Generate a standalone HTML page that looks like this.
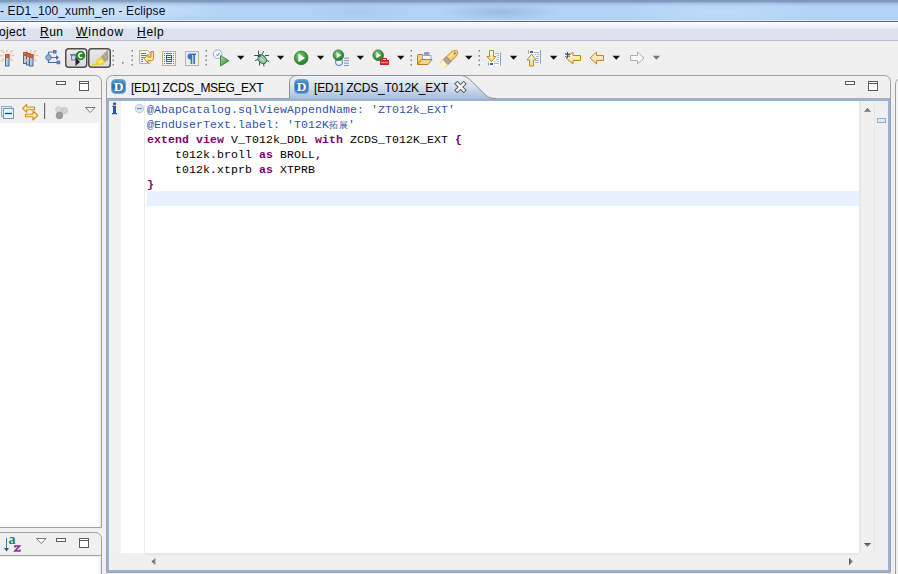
<!DOCTYPE html>
<html><head><meta charset="utf-8">
<style>
*{margin:0;padding:0;box-sizing:border-box}
html,body{width:898px;height:574px;overflow:hidden;background:#f0f0f0;position:relative;font-family:"Liberation Sans",sans-serif;font-size:12px;color:#000}
.a{position:absolute}
#title{left:0;top:0;width:898px;height:22px;background:radial-gradient(ellipse 150px 12px at 95px 11px,rgba(232,243,255,.6),rgba(232,243,255,0)),radial-gradient(ellipse 60px 9px at 500px 12px,rgba(120,150,185,.35),rgba(120,150,185,0)),radial-gradient(ellipse 120px 12px at 720px 12px,rgba(205,232,255,.45),rgba(205,232,255,0)),radial-gradient(ellipse 60px 10px at 360px 12px,rgba(140,170,205,.2),rgba(140,170,205,0)),linear-gradient(#7c98b8 0,#7e9aba 1.5px,#9ab8dc 3px,#aacbef 5px,#b0d2f4 7px,#b0d2f4 19.5px,#d8eafa 20px,#d8eafa 21px,#5a6878 21px,#5a6878 22px)}
#titletxt{left:0;top:4px;font-size:12px;color:#0a0a28;letter-spacing:0.1px;white-space:pre}
#menu{left:0;top:22px;width:898px;height:19px;background:linear-gradient(#ffffff 0,#f4f5fa 3px,#eceef6 6px,#dde2f0 7px,#dce1ef 18px,#b8bcc9 18px,#b8bcc9 19px)}
.mi{top:25px;white-space:pre;color:#000}
.u{text-decoration:underline;text-underline-offset:1px}
.code{font-family:"Liberation Mono",monospace;font-size:11.5px;letter-spacing:0.1px;white-space:pre;line-height:15px}
.kw{color:#7f0070;font-weight:bold}
.an{color:#3052a8}
</style></head><body>
<div id="title" class="a"></div>
<div id="titletxt" class="a">- ED1_100_xumh_en - Eclipse</div>
<div id="menu" class="a"></div>
<div class="a mi" style="left:-1px;letter-spacing:0.3px">oject</div>
<div class="a mi" style="left:40px;letter-spacing:0.5px"><span class="u">R</span>un</div>
<div class="a mi" style="left:76px;letter-spacing:0.9px"><span class="u">W</span>indow</div>
<div class="a mi" style="left:137px;letter-spacing:0.7px"><span class="u">H</span>elp</div>

<!-- toolbar -->
<svg class="a" style="left:0;top:0" width="898" height="80">
<defs>
  <linearGradient id="tgb" x1="0" y1="0" x2="0" y2="1"><stop offset="0" stop-color="#e9e9e9"/><stop offset="1" stop-color="#d9d9d9"/></linearGradient>
  <radialGradient id="grn" cx="0.4" cy="0.35" r="0.7"><stop offset="0" stop-color="#8fd08a"/><stop offset="0.6" stop-color="#3c9a3c"/><stop offset="1" stop-color="#1e6e24"/></radialGradient>
  <linearGradient id="grn2" x1="0" y1="0" x2="1" y2="1"><stop offset="0" stop-color="#a8e0a0"/><stop offset="1" stop-color="#2e8a36"/></linearGradient>
  <linearGradient id="yel" x1="0" y1="0" x2="0" y2="1"><stop offset="0" stop-color="#fffbe6"/><stop offset="1" stop-color="#f6d78a"/></linearGradient>
  <linearGradient id="wand" x1="0" y1="0" x2="1" y2="0"><stop offset="0" stop-color="#c6d7ea"/><stop offset="1" stop-color="#9db7d6"/></linearGradient>
</defs>
<!-- icon1 spark wand -->
<g stroke="#f4c98a" stroke-width="1.6" stroke-linecap="round">
  <path d="M7 50.5 V52 M0.5 55.5 H3 M11 55.5 H13.5 M1.5 50.5 L3.5 52.5 M12.5 50.5 L10.5 52.5 M1.5 61 L3.5 59 M12.5 61 L10.5 59"/>
</g>
<rect x="5.5" y="54.5" width="3.5" height="11.5" fill="url(#wand)" stroke="#4c6a96"/>
<rect x="5.5" y="54.5" width="3.5" height="3" fill="#d8683c" stroke="#b85a3a"/>
<!-- icon2 multi wand -->
<g stroke="#f4c98a" stroke-width="1.6" stroke-linecap="round">
  <path d="M31 50.5 V52 M35 55.5 H37.5 M26 50.5 L28 52.5 M36 50.5 L34 52.5 M36 61 L34 59 M26 61 L28 59"/>
</g>
<rect x="23.5" y="52.5" width="3.5" height="11" fill="url(#wand)" stroke="#4c6a96"/>
<rect x="23.5" y="52.5" width="3.5" height="3" fill="#d8683c" stroke="#b85a3a"/>
<rect x="26.5" y="53.5" width="3.5" height="11.5" fill="url(#wand)" stroke="#4c6a96"/>
<rect x="26.5" y="53.5" width="3.5" height="3" fill="#d8683c" stroke="#b85a3a"/>
<rect x="29.5" y="54.5" width="3.5" height="11.5" fill="url(#wand)" stroke="#4c6a96"/>
<rect x="29.5" y="54.5" width="3.5" height="3" fill="#d8683c" stroke="#b85a3a"/>
<path d="M25 62 L28.5 58.5" stroke="#f4c98a" stroke-width="1.4"/>
<!-- icon3 flow -->
<g fill="none" stroke="#4a6aa8" stroke-width="1.2">
  <path d="M48.5 52 V62.5 H57 M48.5 52 H54.5 M48.5 57.5 H57"/>
</g>
<circle cx="48.5" cy="57.5" r="2.8" fill="#8eb0de" stroke="#5a7cb8"/>
<rect x="53.5" y="50.5" width="2.6" height="2.6" fill="#6b8cc8" stroke="#4a6aa8" stroke-width="0.8"/>
<rect x="57" y="61" width="2.8" height="2.8" fill="#6b8cc8" stroke="#4a6aa8" stroke-width="0.8"/>
<path d="M56 55 L59 57.5 L56 60 Z" fill="#4a6aa8"/>
<!-- toggle buttons -->
<rect x="65.75" y="48.75" width="21" height="18.5" rx="3" fill="url(#tgb)" stroke="#4f4f4f" stroke-width="1.5"/>
<rect x="88.75" y="48.75" width="21.5" height="18.5" rx="3" fill="url(#tgb)" stroke="#4f4f4f" stroke-width="1.5"/>
<rect x="71.5" y="55" width="4.5" height="5" fill="#bcd7f2" stroke="#7f7fb8"/>
<rect x="70" y="54" width="6.5" height="1.5" fill="#7070b0"/>
<rect x="73" y="52.4" width="3.2" height="1.6" fill="#f2d0c0"/>
<circle cx="80.5" cy="55.5" r="4.2" fill="#1f8a2a" stroke="#0e6a1a" stroke-width="0.8"/>
<path d="M82.3 53.8 A2.2 2.2 0 1 0 82.3 57.2" fill="none" stroke="#fff" stroke-width="1.4"/>
<path d="M75.5 57 V66 L80 62 Z" fill="#222"/>
<path d="M107.7 50 L101 57 L104.7 62 L108 59.5 Z" fill="#a9a48f" stroke="#948e78" stroke-width="0.5"/>
<path d="M103 53.5 L106.5 58" stroke="#c8c4b0" stroke-width="0.8"/>
<path d="M101 57 L97.5 59.8 L96 63.3 L98 64.6 L103 64.2 L104.7 62 Z" fill="#f6dc3a" stroke="#e2c418" stroke-width="0.6"/>
<path d="M99 62.5 L102.5 60.5" stroke="#fff5a8" stroke-width="1.2"/>
<path d="M91.8 64.7 H97" stroke="#ecd020" stroke-width="1.4"/>
<!-- separators -->
<g fill="#8a8a80">
  <rect x="112.5" y="50" width="1.5" height="1.6"/><rect x="112.5" y="55" width="1.5" height="1.6"/><rect x="112.5" y="59.5" width="1.5" height="1.6"/><rect x="112.5" y="64" width="1.5" height="1.6"/>
  <rect x="122" y="62" width="1.6" height="1.6"/>
  <rect x="131.5" y="50" width="1.5" height="1.6"/><rect x="131.5" y="55" width="1.5" height="1.6"/><rect x="131.5" y="59.5" width="1.5" height="1.6"/><rect x="131.5" y="64" width="1.5" height="1.6"/>
  <rect x="205.5" y="50" width="1.5" height="1.6"/><rect x="205.5" y="55" width="1.5" height="1.6"/><rect x="205.5" y="59.5" width="1.5" height="1.6"/><rect x="205.5" y="64" width="1.5" height="1.6"/>
  <rect x="410.5" y="50" width="1.5" height="1.6"/><rect x="410.5" y="55" width="1.5" height="1.6"/><rect x="410.5" y="59.5" width="1.5" height="1.6"/><rect x="410.5" y="64" width="1.5" height="1.6"/>
  <rect x="478.5" y="50" width="1.5" height="1.6"/><rect x="478.5" y="55" width="1.5" height="1.6"/><rect x="478.5" y="59.5" width="1.5" height="1.6"/><rect x="478.5" y="64" width="1.5" height="1.6"/>
</g>
<!-- word wrap doc -->
<path d="M139.5 50.5 H147.5 L150 53 V63.5 H139.5 Z" fill="#eef4fb" stroke="#c2b47e"/>
<path d="M141 53.5 H146 M141 55.5 H147 M141 57.5 H147 M141 59.5 H143 M141 61.5 H143" stroke="#5a7cc0" stroke-width="1"/>
<path d="M151 51.5 H153.5 V58.5 Q153.5 60.5 151.5 60.5 H148 V63 L144 58.75 L148 54.5 V57 H151 Z" fill="#fbe7a8" stroke="#c8861a" stroke-width="1" stroke-linejoin="round"/>
<!-- block -->
<rect x="162.5" y="51.5" width="13" height="14" fill="#f2f6fb" stroke="#c2b47e"/>
<g fill="#5a7cc0">
<rect x="164" y="53" width="1" height="1"/><rect x="164" y="55" width="1" height="1"/><rect x="164" y="57" width="1" height="1"/><rect x="164" y="59" width="1" height="1"/><rect x="164" y="61" width="1" height="1"/><rect x="164" y="63" width="1" height="1"/>
<rect x="173" y="53" width="1" height="1"/><rect x="173" y="55" width="1" height="1"/><rect x="173" y="57" width="1" height="1"/><rect x="173" y="59" width="1" height="1"/><rect x="173" y="61" width="1" height="1"/><rect x="173" y="63" width="1" height="1"/>
<rect x="166" y="53" width="6" height="1"/><rect x="166" y="63" width="6" height="1"/>
</g>
<rect x="166.5" y="55.5" width="5" height="6" fill="#fff" stroke="#2f5ea8"/>
<path d="M167 57.5 H171 M167 59.5 H171" stroke="#2f5ea8"/>
<!-- pilcrow -->
<rect x="185.5" y="51.5" width="13" height="14" fill="#e8f0fa" stroke="#c2b47e"/>
<path d="M190 53.5 H196 V55 H195 V64 H193.3 V55 H192.3 V64 H190.6 V59.5 Q187.5 59.5 187.5 56.5 Q187.5 53.5 190 53.5 Z" fill="#3a76c0"/>
<!-- run history -->
<circle cx="217.7" cy="54.2" r="4.3" fill="#f4f8fd" stroke="#8aaee0" stroke-width="1"/>
<path d="M216.5 54.5 L217.5 55.8 L219.5 52.8" fill="none" stroke="#707070" stroke-width="0.9"/>
<path d="M220.5 55.5 V66 L229 60.75 Z" fill="url(#grn2)" stroke="#2a7a2a" stroke-width="0.8"/>
<!-- dropdowns -->
<g fill="#111">
  <path d="M237 55.8 H244.5 L240.75 59.8 Z"/>
  <path d="M276.8 55.8 H284.3 L280.55 59.8 Z"/>
  <path d="M316.8 55.8 H324.3 L320.55 59.8 Z"/>
  <path d="M356.6 55.8 H364.1 L360.35 59.8 Z"/>
  <path d="M397 55.8 H404.5 L400.75 59.8 Z"/>
  <path d="M465 55.8 H472.5 L468.75 59.8 Z"/>
  <path d="M509.8 55.8 H517.3 L513.55 59.8 Z"/>
  <path d="M549.9 55.8 H557.4 L553.65 59.8 Z"/>
  <path d="M612.5 55.8 H620 L616.25 59.8 Z"/>
</g>
<path d="M652.7 55.8 H660.2 L656.45 59.8 Z" fill="#777"/>
<!-- bug -->
<g stroke="#2a5a4a" stroke-width="1" fill="none" stroke-linecap="round">
  <path d="M258.5 54 V51 M262 54.5 L263.5 51.5 M257.5 55.5 H254.5 M258 59.5 L255.5 60.5 M259.5 62 V65 M265.5 55.5 H268.5 M266 60 L269 61.5 M263.5 63.5 L264 66"/>
</g>
<ellipse cx="262.2" cy="59.2" rx="3.6" ry="4.9" transform="rotate(-42 262.2 59.2)" fill="#9cc8a0" stroke="#2c6a6e" stroke-width="1"/>
<path d="M260.5 57.5 L264 61" stroke="#d8ecd8" stroke-width="0.8"/>
<circle cx="259.3" cy="55.8" r="1.5" fill="#2c5a4e"/>
<!-- play -->
<circle cx="301.2" cy="57.9" r="6.8" fill="url(#grn)" stroke="#2a8a32" stroke-width="0.9"/>
<path d="M298.3 53.6 V62.2 L305 57.9 Z" fill="#fff"/>
<!-- run with list -->
<circle cx="339" cy="62" r="3.4" fill="#eef4fb" stroke="#5a86c8" stroke-width="1.1"/>
<circle cx="338.4" cy="55.2" r="5.3" fill="url(#grn)" stroke="#1e6a24" stroke-width="0.7"/>
<path d="M336.6 52.2 V58.2 L341.2 55.2 Z" fill="#fff"/>
<path d="M344 58.2 H349 M344 60.7 H349 M344 63.2 H349 M344 65.5 H349" stroke="#6a8ac8" stroke-width="0.9"/>
<!-- run toolbox -->
<circle cx="378.2" cy="55.2" r="5.3" fill="url(#grn)" stroke="#1e6a24" stroke-width="0.7"/>
<path d="M376.4 52.2 V58.2 L381 55.2 Z" fill="#fff"/>
<rect x="380.5" y="60.5" width="8" height="4" fill="#e83030" stroke="#c01818" stroke-width="0.9"/>
<path d="M382.5 60.5 V58.5 H386.5 V60.5" fill="none" stroke="#c01818" stroke-width="1"/>
<path d="M381 62.5 H388" stroke="#ffb0b0" stroke-width="0.7"/>
<!-- folder -->
<path d="M417.5 64 V55.5 Q417.5 54.5 418.5 54.5 H422.5 V59 Z" fill="#f4cf80" stroke="#c07a20" stroke-width="1"/>
<rect x="422.5" y="55.5" width="8.5" height="5" fill="#f4f6fb" stroke="#9aa4b4" stroke-width="1"/>
<rect x="424" y="52" width="5.5" height="3" rx="1" fill="#8a9cc0"/>
<path d="M417.5 64.5 L421.5 59.5 H432 L428 64.5 Z" fill="#f6d584" stroke="#c07a20" stroke-width="1" stroke-linejoin="round"/>
<!-- pen -->
<g transform="translate(449.2 58.6) rotate(-44)">
  <path d="M-1 -3.3 H7 L11 -1 V1 L7 3.3 H-1 Z" fill="#f6cd70" stroke="#d08a28" stroke-width="0.9"/>
  <path d="M1 -1.8 H8 V0 H1 Z" fill="#fbe6a8"/>
  <circle cx="7.5" cy="0" r="0.9" fill="#3a5aa8"/>
  <rect x="-5.5" y="-3.5" width="4.8" height="7" rx="1" fill="#aaa6a8" stroke="#8c7c60" stroke-width="0.8"/>
  <path d="M-5.5 -3.2 H-9.5 Q-11.5 0 -9.5 3.2 H-5.5 Z" fill="#fff6c0"/>
  <path d="M-9.5 -3.2 H-5.5 M-9.5 3.2 H-5.5" stroke="#f2c860" stroke-width="0.8"/>
</g>
<!-- down doc -->
<rect x="489" y="53" width="11" height="13" fill="#f6f9fc"/>
<path d="M500.5 52.5 V65.5" stroke="#8ea2b8" stroke-width="1"/>
<path d="M488.5 62.5 V65.5" stroke="#8a9ab0" stroke-width="1"/>
<path d="M495 53.5 H499 M497 55.5 H499 M497 57.5 H499 M496 59.5 H499 M494 61.5 H495.5 M497 61.5 H499 M494 63.5 H499" stroke="#a4b6d8" stroke-width="1"/>
<rect x="490" y="63" width="3" height="2" fill="#3a62b0"/>
<path d="M489.5 50.5 H493.5 V56.5 H496 L491.5 61.5 L487 56.5 H489.5 Z" fill="url(#yel)" stroke="#c8861a" stroke-width="1" stroke-linejoin="round"/>
<!-- up doc -->
<rect x="528" y="50" width="12.5" height="14" fill="#f6f9fc"/>
<path d="M540.5 50 V63.5" stroke="#8ea2b8" stroke-width="1"/>
<path d="M528.5 50 V54" stroke="#b0a878" stroke-width="1"/>
<rect x="530" y="51" width="3" height="2" fill="#3a62b0"/>
<path d="M534 52.5 H539 M535 54.5 H536 M537 54.5 H539 M536 56.5 H539 M536 58.5 H539 M536 60.5 H539 M535 62.5 H539" stroke="#a4b6d8" stroke-width="1"/>
<path d="M529.5 66 V60 H527 L531.5 54 L536 60 H533.5 V66 Z" fill="url(#yel)" stroke="#c8861a" stroke-width="1" stroke-linejoin="round"/>
<!-- back edit -->
<path d="M566 58 L573 52 V55.5 H580.5 V60.5 H573 V64 Z" fill="url(#yel)" stroke="#c8861a" stroke-width="1" stroke-linejoin="round"/>
<path d="M567.5 52 V58 M565 53.5 L570 56.5 M570 53.5 L565 56.5" stroke="#2a5090" stroke-width="1.1"/>
<!-- back -->
<path d="M590 58 L596.5 52 V55.5 H603.5 V60.5 H596.5 V64 Z" fill="url(#yel)" stroke="#c8861a" stroke-width="1" stroke-linejoin="round"/>
<!-- forward gray -->
<path d="M644 58 L637.5 52 V55.5 H630.5 V60.5 H637.5 V64 Z" fill="#f6f6f6" stroke="#b0b0b0" stroke-width="1" stroke-linejoin="round"/>
</svg>

<!-- left top panel -->
<svg class="a" style="left:0;top:0" width="898" height="574">
  <!-- left top panel border -->
  <path d="M-10 75.5 H95.5 A6 6 0 0 1 101.5 81.5 V527.5 H-10" fill="#f0f0f0" stroke="#a0a0a0" stroke-width="1"/>
  <line x1="0" y1="98.5" x2="101" y2="98.5" stroke="#a0a0a0"/>
  <rect x="0" y="123" width="99" height="404" fill="#fff"/>
  <!-- left bottom panel -->
  <path d="M-10 532.5 H95.5 A6 6 0 0 1 101.5 538.5 V580" fill="#f0f0f0" stroke="#a0a0a0" stroke-width="1"/>
  <line x1="0" y1="555.5" x2="101" y2="555.5" stroke="#a0a0a0"/>
  <rect x="0" y="557" width="99" height="17" fill="#fff"/>
  <!-- editor panel -->
  <path d="M106.5 572.5 V81.5 A6 6 0 0 1 112.5 75.5 H884.5 A6 6 0 0 1 890.5 81.5 V572.5 Z" fill="#f0f0f0" stroke="#a0a0a0"/>
  <line x1="107" y1="98.5" x2="890" y2="98.5" stroke="#a0a0a0"/>
  <!-- right panel -->
  <path d="M895.5 580 V84 A6 6 0 0 1 901.5 78" fill="#f4f4f4" stroke="#a0a0a0"/>
</svg>

<!-- left panel icons -->
<svg class="a" style="left:0;top:70px" width="105" height="504">
<!-- top panel min/max (y offset 70) -->
<rect x="56.5" y="11.5" width="9" height="3" fill="#fff" stroke="#5c5c5c"/>
<rect x="79.5" y="11.5" width="9" height="9" fill="#fff" stroke="#5c5c5c"/>
<line x1="80" y1="13.5" x2="88" y2="13.5" stroke="#5c5c5c"/>
<!-- collapse all -->
<rect x="1.5" y="36.5" width="10" height="10" fill="#d8eefa" stroke="#9aa8c0"/>
<rect x="3.5" y="38.5" width="10" height="10" fill="#e4f4fc" stroke="#8490a8"/>
<path d="M5 43.5 H12" stroke="#1e4a8a" stroke-width="1.3"/>
<!-- link arrows -->
<path d="M22.5 38.3 L26.7 34.3 V37 H34.5 V39.7 H26.7 V42.3 Z" fill="#fdeeb8" stroke="#c8901e" stroke-width="1.1" stroke-linejoin="round"/>
<path d="M37.8 45.5 L33 41 V44.2 H25.5 V46.8 H33 V50 Z" fill="#fdeeb8" stroke="#c8901e" stroke-width="1.1" stroke-linejoin="round"/>
<!-- separator -->
<rect x="44" y="33" width="1.2" height="16" fill="#6a6a6a"/>
<!-- gray balls -->
<circle cx="58.5" cy="39.5" r="3" fill="#d8d8d8" stroke="#c4c4c4" stroke-width="0.6"/>
<circle cx="64.5" cy="40.5" r="3.2" fill="#d0d0d0" stroke="#bcbcbc" stroke-width="0.6"/>
<circle cx="59.5" cy="45.5" r="3.4" fill="#9c9c9c" stroke="#8a8a8a" stroke-width="0.6"/>
<!-- view menu triangle -->
<path d="M85.5 37.5 H95 L90.25 42.5 Z" fill="#fff" stroke="#6a6a6a" stroke-width="0.9" stroke-linejoin="round"/>
<!-- bottom panel (offset 70) -->
<path d="M6.5 468 V480" stroke="#3a78b0" stroke-width="1"/>
<path d="M4 478 L6.5 481.5 L9 478 Z" fill="#2e5a7a"/>
<text x="8.6" y="474" font-family="Liberation Serif" font-weight="bold" font-size="14" fill="#138070">a</text>
<path d="M15 477.6 V476 H19.5 L15 481 H19.9 V479.4" fill="none" stroke="#8a2a9a" stroke-width="1.7" stroke-linejoin="miter"/>
<path d="M36.5 468.5 H46 L41.25 473.5 Z" fill="#fff" stroke="#6a6a6a" stroke-width="0.9" stroke-linejoin="round"/>
<rect x="56.5" y="468.5" width="9" height="3" fill="#fff" stroke="#5c5c5c"/>
<rect x="79.5" y="468.5" width="9" height="9" fill="#fff" stroke="#5c5c5c"/>
<line x1="80" y1="470.5" x2="88" y2="470.5" stroke="#5c5c5c"/>
</svg>

<!-- editor tabs -->
<svg class="a" style="left:0;top:0" width="898" height="574">
  <defs>
    <linearGradient id="tabg" x1="0" y1="0" x2="0" y2="1">
      <stop offset="0" stop-color="#eef3f9"/>
      <stop offset="0.45" stop-color="#d4dfec"/>
      <stop offset="0.88" stop-color="#a9c0dc"/>
      <stop offset="1" stop-color="#9ab4d6"/>
    </linearGradient>
    <linearGradient id="dg" x1="0" y1="0" x2="0" y2="1">
      <stop offset="0" stop-color="#5e9ad0"/>
      <stop offset="0.5" stop-color="#2d6fb0"/>
      <stop offset="1" stop-color="#4a8ac6"/>
    </linearGradient>
  </defs>
  <!-- active tab shape -->
  <path d="M289.5 101 V82 C289.5 79 292 76 296 76 H462 C466 76.5 468.5 78 472 81.5 L484 93.5 C487 96.5 490 98.5 496 98.5 H890 V101 Z" fill="url(#tabg)"/>
  <path d="M289.5 98.5 V82 C289.5 79 292 76 296 75.5 H462 C466 76.5 468.5 78 472 81.5 L484 93.5 C487 96.5 490 98.5 496 98.5" fill="none" stroke="#909090"/>
  <rect x="107" y="99" width="783" height="2" fill="#97b3d6"/>
  <!-- tab 1 D icon -->
  <rect x="111.5" y="79.5" width="14" height="14" rx="4" fill="url(#dg)" stroke="#6da5d6" stroke-width="1"/>
  <text x="118.6" y="91.2" font-family="Liberation Serif" font-weight="bold" font-size="13.5" fill="#fff" text-anchor="middle">D</text>
  <rect x="294.5" y="79.5" width="14" height="14" rx="4" fill="url(#dg)" stroke="#6da5d6" stroke-width="1"/>
  <text x="301.6" y="91.2" font-family="Liberation Serif" font-weight="bold" font-size="13.5" fill="#fff" text-anchor="middle">D</text>
  <!-- close X -->
  <path d="M457.3 83.8 L463.7 90.2 M463.7 83.8 L457.3 90.2" stroke="#555" stroke-width="4.4" stroke-linecap="square"/>
  <path d="M457.3 83.8 L463.7 90.2 M463.7 83.8 L457.3 90.2" stroke="#fff" stroke-width="2.4" stroke-linecap="square"/>
  <!-- min/max editor -->
  <rect x="845.5" y="81.5" width="9" height="3" fill="#fff" stroke="#5c5c5c"/>
  <rect x="868.5" y="81.5" width="9" height="9" fill="#fff" stroke="#5c5c5c"/>
  <line x1="869" y1="83.5" x2="877" y2="83.5" stroke="#5c5c5c"/>
  <!-- blue borders -->
  <rect x="107" y="101" width="2" height="471" fill="#97b3d6"/>
  <rect x="888" y="101" width="2" height="471" fill="#97b3d6"/>
  <rect x="107" y="570" width="783" height="2" fill="#97b3d6"/>
  <!-- content -->
  <rect x="109" y="101" width="12" height="452" fill="#f1f1f1"/>
  <rect x="121" y="101" width="738" height="452" fill="#fff"/>
  <rect x="144" y="101" width="1" height="452" fill="#ececec"/>
  <rect x="147" y="191" width="712" height="15" fill="#e8f2fe"/>
  <!-- scrollbars -->
  <rect x="109" y="553" width="779" height="17" fill="#f0f0f0"/>
  <rect x="875" y="101" width="13" height="469" fill="#efefef"/>
  <rect x="859" y="101" width="15" height="452" fill="url(#vsg)"/>
  <rect x="145" y="553" width="713" height="16" fill="url(#hsg)"/>
  <linearGradient id="vsg" x1="0" y1="0" x2="1" y2="0">
    <stop offset="0" stop-color="#e3e3e3"/><stop offset="0.2" stop-color="#f0f0f0"/><stop offset="1" stop-color="#f0f0f0"/>
  </linearGradient>
  <linearGradient id="hsg" x1="0" y1="0" x2="0" y2="1">
    <stop offset="0" stop-color="#e3e3e3"/><stop offset="0.2" stop-color="#f0f0f0"/><stop offset="1" stop-color="#f0f0f0"/>
  </linearGradient>
  <rect x="874" y="101" width="1" height="452" fill="#e6e6e6"/>
  <linearGradient id="arw" x1="0" y1="0" x2="0" y2="1"><stop offset="0" stop-color="#505050"/><stop offset="1" stop-color="#9a9a9a"/></linearGradient>
  <linearGradient id="arw2" x1="0" y1="0" x2="0" y2="1"><stop offset="0" stop-color="#505050"/><stop offset="1" stop-color="#9a9a9a"/></linearGradient>
  <linearGradient id="arw3" x1="0" y1="0" x2="1" y2="0"><stop offset="0" stop-color="#505050"/><stop offset="1" stop-color="#9a9a9a"/></linearGradient>
  <linearGradient id="arw4" x1="0" y1="0" x2="1" y2="0"><stop offset="0" stop-color="#505050"/><stop offset="1" stop-color="#9a9a9a"/></linearGradient>
  <path d="M863.8 112 L867.5 108 L871.2 112 Z" fill="url(#arw)"/>
  <path d="M863.8 543 L871.2 543 L867.5 547 Z" fill="url(#arw2)"/>
  <path d="M155.5 557.8 L151.5 561.5 L155.5 565.2 Z" fill="url(#arw3)"/>
  <path d="M849 557.8 L853 561.5 L849 565.2 Z" fill="url(#arw4)"/>
  <rect x="877.5" y="118.5" width="8" height="4" fill="#dde6f3" stroke="#92aed0"/>
  <!-- ruler icons -->
  <ellipse cx="114.6" cy="103.8" rx="1.7" ry="1.4" fill="#2c52b8"/>
  <path d="M112.3 105.8 H116 V113 H117 V114.3 H112 V113 H113 V107 H112.3 Z" fill="#2c52b8"/>
  <circle cx="139.4" cy="108.5" r="4.2" fill="#d8eaf6" stroke="#b4c8d6"/>
  <line x1="137" y1="108.5" x2="141.8" y2="108.5" stroke="#7c8ca0" stroke-width="1.2"/>
</svg>
<div class="a" style="left:131px;top:81px;white-space:pre;letter-spacing:-0.3px">[ED1] ZCDS_MSEG_EXT</div>
<div class="a" style="left:314px;top:81px;white-space:pre;letter-spacing:-0.2px">[ED1] ZCDS_T012K_EXT</div>
<div class="a code" style="left:147px;top:102px"><span class="an">@AbapCatalog.sqlViewAppendName: 'ZT012k_EXT'</span>
<span class="an">@EndUserText.label: 'T012K<span style="font-size:9px;letter-spacing:0.5px;line-height:0;vertical-align:0.5px">拓展</span>'</span>
<span class="kw">extend view</span> V_T012k_DDL <span class="kw">with</span> ZCDS_T012K_EXT <span class="kw">{</span>
    t012k<span class="kw">.</span>broll <span class="kw">as</span> BROLL<span class="kw">,</span>
    t012k<span class="kw">.</span>xtprb <span class="kw">as</span> XTPRB
<span class="kw">}</span></div>
</body></html>
